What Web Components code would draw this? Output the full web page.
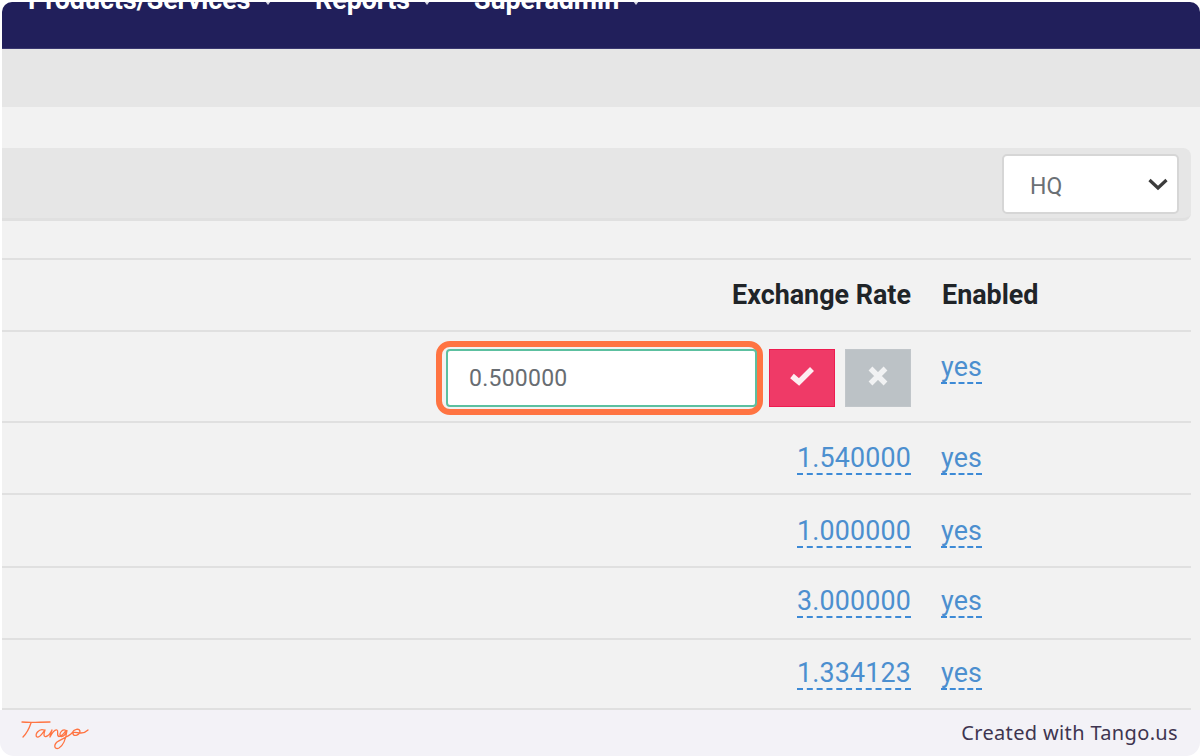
<!DOCTYPE html>
<html><head><meta charset="utf-8"><style>
html,body{margin:0;padding:0;background:#fff;height:756px;overflow:hidden}
</style></head><body>
<template id="t-nav"><style>
:host{display:flex;flex:none;height:47px;margin-left:2px;background:#211f5b;border-bottom:1px solid #3a3870;box-sizing:border-box;border-radius:10px 10px 0 0;overflow:hidden;padding-left:26px;font:700 26.8px Roboto,sans-serif;color:#fff}
span{display:block;flex:none;margin-top:-14px;line-height:24px;white-space:nowrap}
i{display:inline-block;width:0;height:0;border:3.5px solid transparent;border-top:4px solid #d8d8e4;border-bottom:0;margin-left:14px;vertical-align:4px}
</style><span style="width:287px">Products/Services<i></i></span><span style="width:159px">Reports<i></i></span><span>Superadmin<i></i></span></template>
<template id="t-filter"><style>
:host{display:flex;justify-content:flex-end;align-items:flex-start;height:73px;box-sizing:border-box;background:#e6e6e6;border-bottom:3px solid #e0e0e0;border-radius:0 8px 8px 0;padding:6px 12px 0 0;margin-right:9px}
</style><slot></slot></template>
<template id="t-select"><style>
:host{display:flex;align-items:center;justify-content:space-between;box-sizing:border-box;width:177px;height:60px;background:#fff;border:2px solid #d6d6d6;border-radius:5px;padding:2px 8px 0 26px;font:23px Roboto,sans-serif;color:#6b7075}
svg{display:block;margin-top:-3px}
</style><span style="margin-top:3px"><slot></slot></span><svg width="22" height="14" viewBox="0 0 22 14"><path d="M2.5 3 11 11 19.5 3" fill="none" stroke="#3c3c3c" stroke-width="3.2"/></svg></template>
<template id="t-row"><style>
:host{display:grid;grid-template-columns:1fr 249px;box-sizing:border-box;border-bottom:2px solid #e0e0e0;align-items:start;margin-right:9px}
.a{display:flex;justify-content:flex-end;padding-right:31px}
</style><div class="a"><slot name="rate"></slot></div><div class="b"><slot name="on"></slot></div></template>
<template id="t-edit"><style>
:host{display:inline-block;font:26.8px/30px Roboto,sans-serif;letter-spacing:.2px;color:#4c8fcf;border-bottom:2px dashed #3d8ad6;height:30px;white-space:nowrap}
</style><slot></slot></template>
<template id="t-head"><style>
:host{display:block;font:700 26.9px/30px Roboto,sans-serif;color:#202428;white-space:nowrap}
</style><slot></slot></template>
<template id="t-input"><style>
:host{display:flex;align-items:center}
.ring{box-sizing:border-box;flex:none;width:327px;height:74px;border:6px solid #ff7442;border-radius:14px;padding:2px 0 2px 4px}
.f{box-sizing:border-box;height:100%;background:#fff;border:2px solid #5cc0a0;border-radius:4px;padding:1px 0 0 21px;font:23px/55px Roboto,sans-serif;color:#686d72;letter-spacing:.25px;display:flex;align-items:center}
.b{box-sizing:border-box;flex:none;width:66px;height:58px;display:flex;align-items:center;justify-content:center}
.b svg{margin-bottom:5px}
.ok{background:#ef3a67;border:1px solid #ee1c50;margin-left:6px}
.no{background:#bcc2c6;border:1px solid #c1c6ca;margin-left:10px}
</style><div class="ring"><div class="f"><slot></slot></div></div><div class="b ok"><svg width="26" height="21" viewBox="0 0 26 21"><path d="M3 11 10 17 23 4" fill="none" stroke="#fdeef1" stroke-width="5.6"/></svg></div><div class="b no"><svg width="22" height="22" viewBox="0 0 22 22"><path d="M3.5 3.5 18.5 18.5M18.5 3.5 3.5 18.5" fill="none" stroke="#f1f2f3" stroke-width="5.4"/></svg></div></template>
<template id="t-foot"><style>
:host{display:flex;flex:none;align-items:center;justify-content:space-between;box-sizing:border-box;height:46px;background:#f3f2f7;border-radius:0 0 14px 14px;padding:0 22px 0 20px;font:20px/24px "Noto Sans","Open Sans",sans-serif;letter-spacing:.35px;color:#3e3550}
svg{display:block}
</style><svg width="72" height="34" viewBox="0 -2 72 34" fill="none" stroke="#ff7442" stroke-width="1.3" stroke-linecap="round" stroke-linejoin="round"><path d="M2 4C10 5 20 4 30 4M11 5C9 11 6 16 3 19"/><path d="M24 12C19 10 14 17 17 19 20 20 23 14 25 12 24 15 23 19 26 18.5 29 18 31 14 32 12 31 15 30 17 30 19 32 15 35 11 37 12 39 13 36 18 39 18.5 42 18.5 44 15 46 12.5 42 10 38 17 41 18.5 44 19 46 15 47 12.5 46 20 44 27 39 30 35 32 33 28 37 24 41 21 48 19 52 15 54 11 59 10 60 13 60 17 54 19 53 16 53 13 57 15 61 15 64 15 66 14 68 12"/></svg><span><slot></slot></span></template>
<template id="t-page"><style>
:host{display:flex;flex-direction:column;height:756px;box-sizing:border-box;padding:2px 0 0 0;background:#fff;overflow:hidden}
.sub{height:58px;background:#e6e6e6;flex:none;margin-left:2px}
.body{flex:1;background:#f2f2f2;margin-left:2px;display:flex;flex-direction:column;min-height:0;overflow:hidden}
.top{height:41px;flex:none}
.main{flex:1;min-height:0;overflow:hidden}
</style><slot name="nav"></slot><div class="sub"></div><div class="body"><div class="top"></div><div class="main"><slot></slot></div></div><slot name="foot"></slot></template>
<x-page>
<x-nav slot="nav"></x-nav>
<x-filter><x-select>HQ</x-select></x-filter>
<div style="height:37px;border-bottom:2px solid #e0e0e0;margin-right:9px"></div>
<x-row style="height:72px;padding-top:20px"><x-head slot="rate">Exchange Rate</x-head><x-head slot="on">Enabled</x-head></x-row>
<x-row style="height:91px;padding-top:9px"><x-input slot="rate">0.500000</x-input><x-edit slot="on" style="margin:11px 0 0 -1px">yes</x-edit></x-row>
<x-row style="height:72px;padding-top:20px"><x-edit slot="rate">1.540000</x-edit><x-edit slot="on" style="margin-left:-1px">yes</x-edit></x-row>
<x-row style="height:73px;padding-top:21px"><x-edit slot="rate">1.000000</x-edit><x-edit slot="on" style="margin-left:-1px">yes</x-edit></x-row>
<x-row style="height:72px;padding-top:18px"><x-edit slot="rate">3.000000</x-edit><x-edit slot="on" style="margin-left:-1px">yes</x-edit></x-row>
<x-row style="height:70px;padding-top:18px"><x-edit slot="rate">1.334123</x-edit><x-edit slot="on" style="margin-left:-1px">yes</x-edit></x-row>
<x-foot slot="foot">Created with Tango.us</x-foot>
</x-page>
<script>
for (const n of ['nav','filter','select','row','edit','head','input','foot','page']) {
  customElements.define('x-'+n, class extends HTMLElement {
    constructor(){super();this.attachShadow({mode:'open'}).appendChild(document.getElementById('t-'+n).content.cloneNode(true));}
  });
}
</script>
</body></html>
